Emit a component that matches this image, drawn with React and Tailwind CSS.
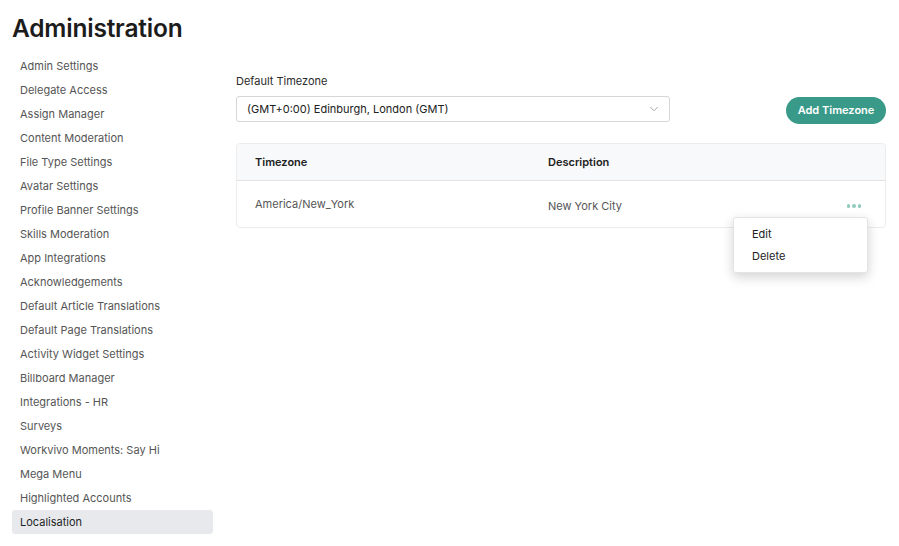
import { ChevronDown } from 'lucide-react';

const NAV_ITEMS = [
  'Admin Settings',
  'Delegate Access',
  'Assign Manager',
  'Content Moderation',
  'File Type Settings',
  'Avatar Settings',
  'Profile Banner Settings',
  'Skills Moderation',
  'App Integrations',
  'Acknowledgements',
  'Default Article Translations',
  'Default Page Translations',
  'Activity Widget Settings',
  'Billboard Manager',
  'Integrations - HR',
  'Surveys',
  'Workvivo Moments: Say Hi',
  'Mega Menu',
  'Highlighted Accounts',
  'Localisation',
];

export default function App() {
  const active = 'Localisation';

  return (
    <div className="h-[546px] w-[899px] overflow-hidden bg-white font-['Inter','Noto_Sans',sans-serif] text-[#222]">
      <div className="px-3 pt-[11px]">
        <h1 className="h-[34px] text-[24.5px] leading-[34px] font-semibold tracking-[-0.2px] text-[#1c1c1c]">Administration</h1>
      </div>

      <div className="mt-[9px] flex pl-3">
        <nav className="flex w-[201px] shrink-0 flex-col">
          {NAV_ITEMS.map((item) => (
            <a
              key={item}
              href="#"
              className={[
                'flex h-6 items-center rounded-[3px] px-2 text-[11px]',
                item === active ? 'bg-[#e7e9ed] text-[#1f1f1f]' : 'text-[#555]',
              ].join(' ')}
            >
              {item}
            </a>
          ))}
        </nav>

        <main className="ml-[23px] w-[650px] pt-[19px]">
          <div className="flex items-end justify-between">
            <div className="w-[434px]">
              <label className="block text-[11px] leading-4 text-[#2a2a2a]">Default Timezone</label>
              <button
                type="button"
                className="mt-[7px] flex h-[26px] w-full items-center justify-between rounded-[3px] border border-[#d6d6d6] bg-white pl-[10px] pr-[8px] text-[11px] text-[#222]"
              >
                <span>(GMT+0:00) Edinburgh, London (GMT)</span>
                <ChevronDown className="h-[14px] w-[14px] text-[#999]" strokeWidth={1.5} />
              </button>
            </div>
            <button
              type="button"
              className="mb-[-2px] h-[27px] w-[100px] rounded-full bg-[#3a9a89] text-[11px] font-semibold text-white"
            >
              Add Timezone
            </button>
          </div>

          <div className="relative mt-[21px] rounded-[4px] border border-[#ececec] bg-white">
            <div className="flex h-[37px] items-center rounded-t-[4px] border-b border-[#e2e2e2] bg-[#f8f9fb] text-[11px] font-semibold text-[#222]">
              <div className="w-[311px] pl-[18px]">Timezone</div>
              <div>Description</div>
            </div>
            <div className="flex h-[46px] items-center text-[11px] text-[#555]">
              <div className="w-[311px] pl-[18px]">America/New_York</div>
              <div className="mt-[4px] flex-1">New York City</div>
              <div className="mr-[24px] mt-[4px] flex gap-[2px]">
                <span className="h-[3.5px] w-[3.5px] rounded-full bg-[#8fcabd]" />
                <span className="h-[3.5px] w-[3.5px] rounded-full bg-[#8fcabd]" />
                <span className="h-[3.5px] w-[3.5px] rounded-full bg-[#8fcabd]" />
              </div>
            </div>

            <div className="absolute left-[496px] top-[73px] z-10 w-[135px] rounded-[3px] border border-[#e4e4e4] bg-white py-[5px] shadow-[0_4px_12px_rgba(0,0,0,0.18)]">
              <div className="flex h-[22px] items-center px-[18px] text-[11px] text-[#222]">Edit</div>
              <div className="flex h-[22px] items-center px-[18px] text-[11px] text-[#222]">Delete</div>
            </div>
          </div>
        </main>
      </div>
    </div>
  );
}
